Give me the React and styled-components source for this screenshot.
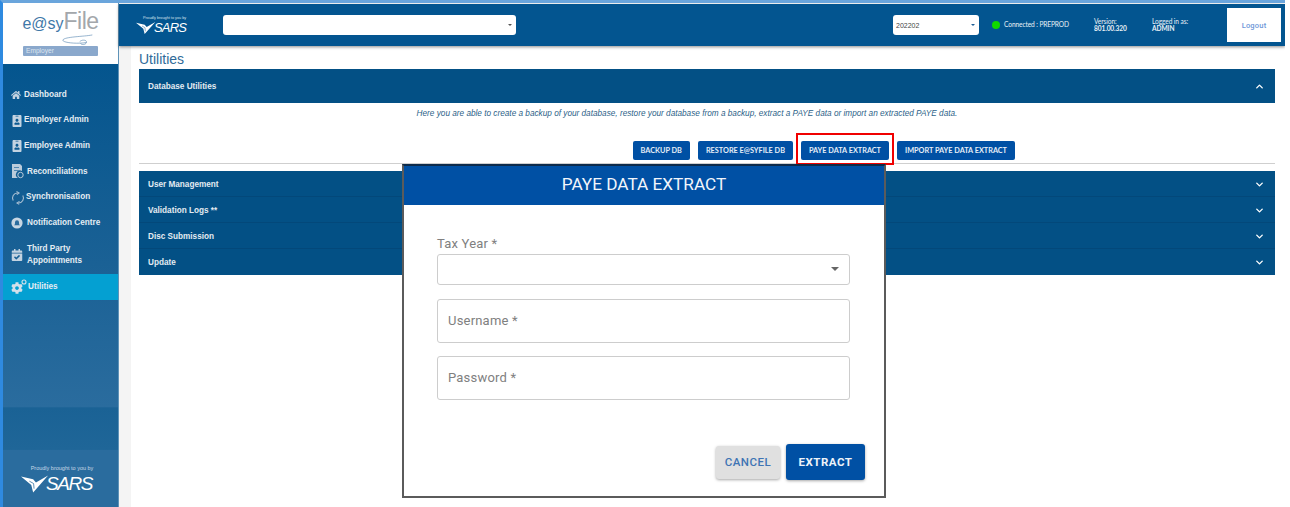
import React from 'react'
import styled, { createGlobalStyle } from 'styled-components'
import { FaHome, FaIdBadge, FaCalendarCheck, FaCog } from 'react-icons/fa'
import { ChevronUp, ChevronDown } from 'lucide-react'

const GlobalStyle = createGlobalStyle`
    html, body{
        margin: 0;
        background: #fff;
    }
    *{
        box-sizing: border-box;
    }
`

const Frame = styled.div`
    position: relative;
    width: 1285px;
    height: 507px;
    overflow: hidden;
    display: flex;
    background: #fff;
    border-top: 3px solid #6aa5dc;
    border-left: 3px solid #2f8ae0;
    font-family: "Liberation Sans", Arial, sans-serif;
`

const Sidebar = styled.aside`
    width: 116px;
    flex-shrink: 0;
    display: flex;
    flex-direction: column;
    border-right: 1px solid #5f93b8;
`

const LogoBox = styled.div`
    height: 61px;
    background: #fff;
    display: flex;
    flex-direction: column;
    align-items: center;
    padding-top: 5px;
`

const LogoWord = styled.div`
    height: 27px;
    font-size: 16px;
    line-height: 27px;
    color: #3f78a8;

    b{
        font-weight: 400;
        font-size: 23px;
        letter-spacing: -.5px;
        color: #a3a7ab;
    }
`

const LogoSwoosh = styled.svg`
    width: 32px;
    height: 14px;
    margin: -2px 0 -1px 34px;
`

const LogoTag = styled.div`
    width: 75px;
    height: 10px;
    padding-left: 3px;
    background: #8aa8cc;
    border-radius: 1px;
    color: #dde5ef;
    font-size: 6.6px;
    line-height: 10px;
`

const Nav = styled.nav`
    flex: 1;
    display: flex;
    flex-direction: column;
    padding-top: 18px;
    background: linear-gradient(180deg, #04558e 0%, #1a6195 45%, #2a6c9e 77.4%, #1a6295 77.6%, #1f6698 87%, #2a6c9e 87.2%, #2a6c9e 100%);
`

const NavItem = styled.div`
    height: ${props => props.$tall ? '38px' : '25.7px'};
    display: flex;
    align-items: center;
    gap: ${props => props.$gap}px;
    padding-left: 8px;
    color: #e4ecf3;
    font-size: 8.2px;
    font-weight: 700;
    line-height: 12.6px;
    background: ${props => props.$active ? '#04a0d2' : 'transparent'};

    > svg{
        flex-shrink: 0;
        color: #c3d3e1;
    }
`

const SideFooter = styled.div`
    margin-top: auto;
    height: 57px;
    display: flex;
    flex-direction: column;
    align-items: center;
    padding: 15px 0 0 3px;
    color: #c8d8e6;
    font-size: 5.5px;
    line-height: 7px;
`

const FooterBrand = styled.div`
    display: flex;
    align-items: center;
    color: #fff;
    margin: 2px 11px 0 0;
`

const Main = styled.div`
    flex: 1;
    min-width: 0;
    display: flex;
    flex-direction: column;
`

const Header = styled.header`
    height: 42px;
    margin-top: 1px;
    flex-shrink: 0;
    display: flex;
    align-items: center;
    padding-left: 17px;
    background: #035590;
    box-shadow: 0 1px 3px rgba(0, 0, 0, .45);
    color: #eaf1f6;
    position: relative;
    z-index: 1;
`

const HeaderBrand = styled.div`
    width: 87px;
    display: flex;
    flex-direction: column;
    align-items: flex-start;
    color: #d5e2ec;
    font-size: 3.8px;
    line-height: 5px;
    text-indent: 7px;
`

const BrandRow = styled.div`
    display: flex;
    align-items: center;
    color: #fff;
    text-indent: 0;
`

const BirdMark = styled.svg`
    width: ${props => props.$width}px;
    height: ${props => props.$height}px;
`

const SarsWord = styled.span`
    font-style: italic;
    font-size: ${props => props.$size}px;
    line-height: 1;
    letter-spacing: ${props => props.$spacing}px;
    margin-left: ${props => props.$left}px;
`

const HeaderSelect = styled.div`
    width: ${props => props.$width}px;
    height: 20px;
    margin-left: ${props => props.$left || 0}px;
    background: #fff;
    border-radius: 3px;
    display: flex;
    align-items: center;
    justify-content: space-between;
    padding: 0 4px 0 3px;
    font-size: 7px;
    color: #444;
`

const Caret = styled.span`
    width: 0;
    height: 0;
    border-left: ${props => props.$size}px solid transparent;
    border-right: ${props => props.$size}px solid transparent;
    border-top: ${props => props.$size}px solid ${props => props.$color};
`

const StatusDot = styled.span`
    width: 8px;
    height: 8px;
    border-radius: 50%;
    background: #10d800;
    margin-left: 13px;
`

const HeaderText = styled.div`
    margin-left: ${props => props.$left}px;
    width: ${props => props.$width}px;
    font-family: Lato, sans-serif;
    font-size: 6.6px;
    line-height: 7.5px;
    letter-spacing: -.1px;

    b{
        display: block;
    }
`

const LogoutButton = styled.div`
    width: 54px;
    height: 34px;
    margin-left: auto;
    margin-right: 4px;
    background: #fff;
    color: #6d96d8;
    display: flex;
    align-items: center;
    justify-content: center;
    font-family: Roboto, sans-serif;
    font-size: 7.5px;
    font-weight: 500;
    letter-spacing: .2px;
`

const Body = styled.div`
    flex: 1;
    display: flex;
    min-height: 0;
`

const GrayStrip = styled.div`
    width: 12px;
    background: #f4f4f4;
`

const Panel = styled.main`
    flex: 1;
    padding: 5px 10px 0 8px;
`

const PageTitle = styled.h1`
    margin: 0;
    height: 18px;
    font-size: 14px;
    font-weight: 400;
    line-height: 16px;
    color: #2f6a99;
`

const AccordionHead = styled.div`
    height: ${props => props.$height}px;
    display: flex;
    align-items: center;
    justify-content: space-between;
    padding: 0 10px 0 9px;
    background: #035085;
    color: #e3ebf2;
    font-size: 8.2px;
    font-weight: 700;
    box-shadow: ${props => props.$line ? 'inset 0 -1px 0 #03487a' : 'none'};

    svg{
        color: #fff;
    }
`

const Intro = styled.p`
    margin: 0;
    padding: 5px 40px 0 0;
    height: 38px;
    text-align: center;
    font-style: italic;
    font-size: 8.23px;
    line-height: 11px;
    color: #2c5f88;
`

const ButtonRow = styled.div`
    display: flex;
    justify-content: flex-end;
    gap: 8px;
    padding: 0 260px 4px 0;
    border-bottom: 1px solid #cfcfcf;
    height: 23px;
`

const ActionButton = styled.div`
    height: 19px;
    padding: 0 8px;
    display: flex;
    align-items: center;
    background: #0050a4;
    border-radius: 2px;
    color: #e6eef7;
    font-family: Lato, sans-serif;
    font-size: 7.3px;
    font-weight: 700;
    position: relative;
`

const Highlight = styled.span`
    position: absolute;
    inset: -8px -5px -5px -5px;
    border: 2px solid #f00000;
`

const AccordionGroup = styled.div`
    margin-top: 7px;
    display: flex;
    flex-direction: column;
`

const Modal = styled.section`
    position: absolute;
    left: 399px;
    top: 161px;
    width: 484px;
    height: 334px;
    display: flex;
    flex-direction: column;
    background: #fff;
    border: 2px solid #5b5b5b;
    border-top-color: #0d2b4b;
    z-index: 2;
`

const ModalTitle = styled.div`
    height: 39px;
    flex-shrink: 0;
    padding-bottom: 3px;
    background: #0050a4;
    color: #f2f6fb;
    display: flex;
    align-items: center;
    justify-content: center;
    font-family: Roboto, sans-serif;
    font-size: 17.2px;
`

const ModalForm = styled.div`
    flex: 1;
    display: flex;
    flex-direction: column;
    padding: 31px 34px 0 33px;
    font-family: Roboto, sans-serif;
    color: #808080;
`

const FieldLabel = styled.label`
    font-size: 13px;
    line-height: 15px;
    letter-spacing: .2px;
    margin-bottom: 3px;
`

const FieldBox = styled.div`
    height: ${props => props.$height}px;
    margin-bottom: ${props => props.$gap}px;
    border: 1px solid #cdcdcd;
    border-radius: 3px;
    display: flex;
    align-items: center;
    justify-content: space-between;
    padding: 0 10px 2px;
    font-size: 13px;
    letter-spacing: .2px;
`

const ModalActions = styled.div`
    display: flex;
    justify-content: flex-end;
    align-items: center;
    gap: 6px;
    padding: 0 19px 16px 0;
    font-family: Roboto, sans-serif;
    font-size: 11.5px;
    font-weight: 500;
    letter-spacing: .5px;
`

const CancelButton = styled.div`
    width: 64px;
    height: 33px;
    display: flex;
    align-items: center;
    justify-content: center;
    background: #e0e0e0;
    color: #3f74b4;
    border-radius: 3px;
    box-shadow: 0 1px 3px rgba(0, 0, 0, .35);
`

const ExtractButton = styled(CancelButton)`
    width: 79px;
    height: 36px;
    background: #0050a4;
    color: #eef3f9;
    font-weight: 700;
`

const Bird = ({ width, height }) => (
    <BirdMark $width={width} $height={height} viewBox="0 0 30 18">
        <path fill="#fff" d="M0 1 L13 4 L16 7.5 L29 0 L13 18 L11 10 Z" />
        <path fill="none" stroke="#2a6c9e" strokeWidth=".8" d="M9 6 L13.5 8.5 L14 14" />
    </BirdMark>
)

const DocIcon = () => (
    <svg width="13" height="15" viewBox="0 0 13 15">
        <path fill="#b9cbdb" d="M1 0h8l2 2v5a4 4 0 0 0-4 7H1z" />
        <path fill="#4f86b0" d="M3 3h5v1H3zM3 6h5v1H3z" />
        <circle cx="9.5" cy="11" r="2.7" fill="none" stroke="#b9cbdb" strokeWidth="1" />
    </svg>
)

const SyncIcon = () => (
    <svg width="14" height="14" viewBox="0 0 14 14" fill="none" stroke="#a9bfd3" strokeWidth="1.1">
        <path d="M2.2 9.5A5 5 0 0 1 6.5 2" />
        <path d="M11.8 4.5A5 5 0 0 1 7.5 12" />
        <path d="M5.5 .6 8 2 5.8 3.6M8.5 10.4 6 12l2.2 1.4" />
    </svg>
)

const BellCircle = () => (
    <svg width="12" height="12" viewBox="0 0 12 12">
        <circle cx="6" cy="6" r="5.6" fill="#c7d6e3" />
        <path fill="#2a6c9e" d="M3 8.2c1-.8 1-1.5 1-3a2 2 0 0 1 4 0c0 1.5 0 2.2 1 3z" />
    </svg>
)

const GearsIcon = () => (
    <svg width="16" height="15" viewBox="0 0 16 15">
        <circle cx="13" cy="3" r="2" fill="none" stroke="#d3e0ea" strokeWidth="1.1" />
        <FaCog x="0" y="3" size={12} color="#d3e0ea" />
    </svg>
)

const navItems = [
    { label: 'Dashboard', icon: <FaHome size={10} />, gap: 3 },
    { label: 'Employer Admin', icon: <FaIdBadge size={12} />, gap: 1 },
    { label: 'Employee Admin', icon: <FaIdBadge size={12} />, gap: 1 },
    { label: 'Reconciliations', icon: <DocIcon />, gap: 3 },
    { label: 'Synchronisation', icon: <SyncIcon />, gap: 1 },
    { label: 'Notification Centre', icon: <BellCircle />, gap: 4 },
    { label: <>Third Party<br />Appointments</>, icon: <FaCalendarCheck size={12} />, tall: true, gap: 4 },
    { label: 'Utilities', icon: <GearsIcon />, active: true, gap: 1 },
]

const actionButtons = ['BACKUP DB', 'RESTORE E@SYFILE DB', 'PAYE DATA EXTRACT', 'IMPORT PAYE DATA EXTRACT']

const closedSections = ['User Management', 'Validation Logs **', 'Disc Submission', 'Update']

export default function App() {
    return (
        <Frame>
            <GlobalStyle />
            <Sidebar>
                <LogoBox>
                    <LogoWord>e@sy<b>File</b></LogoWord>
                    <LogoSwoosh viewBox="0 0 38 14" fill="none" stroke="#4f81ad" strokeWidth=".7">
                        <path d="M36 1C26 3 3 3 1 7c-1 3 16 5 28 3" />
                        <path d="M21 9c3-3 9-2 8 1s-6 3-7 1" />
                    </LogoSwoosh>
                    <LogoTag>Employer</LogoTag>
                </LogoBox>
                <Nav>
                    {navItems.map((item, i) => (
                        <NavItem key={i} $tall={item.tall} $active={item.active} $gap={item.gap}>
                            {item.icon}
                            <span>{item.label}</span>
                        </NavItem>
                    ))}
                    <SideFooter>
                        Proudly brought to you by
                        <FooterBrand>
                            <Bird width={28} height={18} />
                            <SarsWord $size={19} $spacing={-1.4} $left={-3}>SARS</SarsWord>
                        </FooterBrand>
                    </SideFooter>
                </Nav>
            </Sidebar>
            <Main>
                <Header>
                    <HeaderBrand>
                        Proudly brought to you by
                        <BrandRow>
                            <Bird width={20} height={12} />
                            <SarsWord $size={13} $spacing={-.8} $left={-2}>SARS</SarsWord>
                        </BrandRow>
                    </HeaderBrand>
                    <HeaderSelect $width={293}>
                        <span />
                        <Caret $size={2.5} $color="#555" />
                    </HeaderSelect>
                    <HeaderSelect $width={86} $left={377}>
                        202202
                        <Caret $size={2.5} $color="#1f5f96" />
                    </HeaderSelect>
                    <StatusDot />
                    <HeaderText $left={4} $width={85}>Connected : PREPROD</HeaderText>
                    <HeaderText $left={5} $width={58}>Version:<b>801.00.320</b></HeaderText>
                    <HeaderText $left={0} $width={60}>Logged in as:<b>ADMIN</b></HeaderText>
                    <LogoutButton>Logout</LogoutButton>
                </Header>
                <Body>
                    <GrayStrip />
                    <Panel>
                        <PageTitle>Utilities</PageTitle>
                        <AccordionHead $height={34}>
                            Database Utilities
                            <ChevronUp size={11} strokeWidth={3} />
                        </AccordionHead>
                        <Intro>Here you are able to create a backup of your database, restore your database from a backup, extract a PAYE data or import an extracted PAYE data.</Intro>
                        <ButtonRow>
                            {actionButtons.map((label, i) => (
                                <ActionButton key={label}>
                                    {label}
                                    {i === 2 && <Highlight />}
                                </ActionButton>
                            ))}
                        </ButtonRow>
                        <AccordionGroup>
                            {closedSections.map((label, i) => (
                                <AccordionHead key={label} $height={26} $line={i < 3}>
                                    {label}
                                    <ChevronDown size={11} strokeWidth={3} />
                                </AccordionHead>
                            ))}
                        </AccordionGroup>
                    </Panel>
                </Body>
            </Main>
            <Modal>
                <ModalTitle>PAYE DATA EXTRACT</ModalTitle>
                <ModalForm>
                    <FieldLabel>Tax Year *</FieldLabel>
                    <FieldBox $height={31} $gap={14}>
                        <span />
                        <Caret $size={4} $color="#666" />
                    </FieldBox>
                    <FieldBox $height={44} $gap={13}>Username *</FieldBox>
                    <FieldBox $height={44} $gap={0}>Password *</FieldBox>
                </ModalForm>
                <ModalActions>
                    <CancelButton>CANCEL</CancelButton>
                    <ExtractButton>EXTRACT</ExtractButton>
                </ModalActions>
            </Modal>
        </Frame>
    )
}
